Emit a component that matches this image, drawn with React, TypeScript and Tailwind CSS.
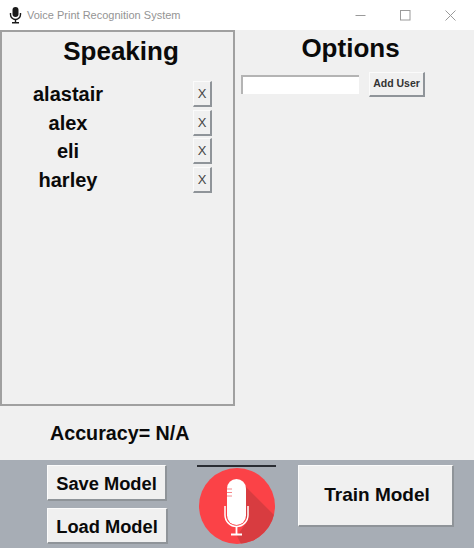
const users = ["alastair", "alex", "eli", "harley"]

function RaisedButton({ label, className }: { label: string; className: string }) {
  return (
    <button className={`flex items-center justify-center whitespace-nowrap bg-[#f0f0f0] border-r-2 border-b-2 border-[#8f9499] border-t border-l border-t-[#fbfbfb] border-l-[#fbfbfb] ${className}`}>
      {label}
    </button>
  )
}

function MicBadge() {
  return (
    <svg width="76" height="76" viewBox="0 0 76 76">
      <defs>
        <clipPath id="badge">
          <circle cx="38" cy="38" r="38" />
        </clipPath>
      </defs>
      <circle cx="38" cy="38" r="38" fill="#fb4247" />
      <path d="M46 18 L80 52 L80 80 L44 80 L38 68 L47 55 Z" fill="#d83c40" clipPath="url(#badge)" />
      <rect x="28" y="11" width="19" height="46" rx="9.5" fill="#ffffff" />
      <path d="M28 21h5M28 24.5h5M28 28h5" stroke="#f4888b" strokeWidth="1" />
      <path d="M26 38v9a11.5 11.5 0 0 0 23 0v-9" fill="none" stroke="#ffffff" strokeWidth="1.5" />
      <path d="M37.5 58v8M32 66.5h11" stroke="#ffffff" strokeWidth="1.8" />
    </svg>
  )
}

export default function App() {
  return (
    <div className="w-[474px] h-[548px] flex flex-col bg-[#f0f0f0] overflow-hidden font-['Liberation_Sans',Arial,sans-serif] text-[#0a0a0a]">
      {/* title bar */}
      <div className="h-[30px] bg-white flex items-center shrink-0">
        <svg className="ml-[9px]" width="13" height="18" viewBox="0 0 13 18">
          <rect x="3.5" y="1" width="6" height="10" rx="3" fill="#1a1a1a" />
          <path d="M1.5 7v1.5a5 5 0 0 0 10 0V7" fill="none" stroke="#1a1a1a" strokeWidth="1.4" />
          <path d="M6.5 13.5v2.5M3 16.8h7" stroke="#1a1a1a" strokeWidth="1.4" />
        </svg>
        <span className="ml-[5px] text-[11px] text-[#949494]">Voice Print Recognition System</span>
        <div className="ml-auto flex items-center">
          <div className="w-[45px] flex justify-center">
            <svg width="11" height="11" viewBox="0 0 11 11"><path d="M0.5 5.5h10" stroke="#9a9a9a" /></svg>
          </div>
          <div className="w-[45px] flex justify-center">
            <svg width="11" height="11" viewBox="0 0 11 11"><rect x="0.5" y="0.5" width="9.5" height="9.5" fill="none" stroke="#9a9a9a" /></svg>
          </div>
          <div className="w-[45px] mr-[1px] flex justify-center">
            <svg width="11" height="11" viewBox="0 0 11 11"><path d="M0.5 0.5l10 10M10.5 0.5l-10 10" stroke="#9a9a9a" /></svg>
          </div>
        </div>
      </div>

      <div className="flex h-[376px] shrink-0">
        {/* speaking list */}
        <div className="w-[235px] border-2 border-[#a0a0a0]">
          <h1 className="ml-[60px] mt-[4px] w-[118px] text-center text-[26px] leading-[30px] font-bold">Speaking</h1>
          <div className="mt-[14px] flex flex-col">
            {users.map((name) => (
              <div key={name} className="h-[28.5px] flex items-center">
                <span className="w-[132px] text-center text-[20px] font-bold">{name}</span>
                <RaisedButton label="X" className="ml-[59px] w-[19px] h-[26px] text-[13px] text-[#444]" />
              </div>
            ))}
          </div>
        </div>

        {/* options */}
        <div className="flex-1">
          <h2 className="mt-[3px] text-center text-[26px] leading-[30px] font-bold pr-[8px]">Options</h2>
          <div className="mt-[9px] ml-[6px] flex items-center">
            <input className="w-[118px] h-[19px] bg-white border-t-2 border-l-2 border-[#b4b4b4]" />
            <RaisedButton label="Add User" className="ml-[10px] w-[56px] h-[25px] text-[10.5px] font-bold text-[#333]" />
          </div>
        </div>
      </div>

      <div className="h-[54px] shrink-0 flex items-center pl-[50px] pt-[2px] text-[19.7px] font-bold">Accuracy= N/A</div>

      {/* bottom bar */}
      <div className="flex-1 bg-[#a7adb5] flex items-start pl-[47px] pt-[5px]">
        <div className="flex flex-col gap-[7px]">
          <RaisedButton label="Save Model" className="w-[120px] h-[36px] text-[18.3px] font-bold pt-[2px]" />
          <RaisedButton label="Load Model" className="w-[121px] h-[36px] text-[18.3px] font-bold pt-[2px]" />
        </div>
        <div className="ml-[29px] w-[79px] flex flex-col items-center">
          <div className="w-full h-[1.5px] bg-[#2a2d33]" />
          <div className="mt-[1px]"><MicBadge /></div>
        </div>
        <RaisedButton label="Train Model" className="ml-[22px] w-[156px] h-[62px] text-[19px] font-bold pl-[3px]" />
      </div>
    </div>
  )
}
